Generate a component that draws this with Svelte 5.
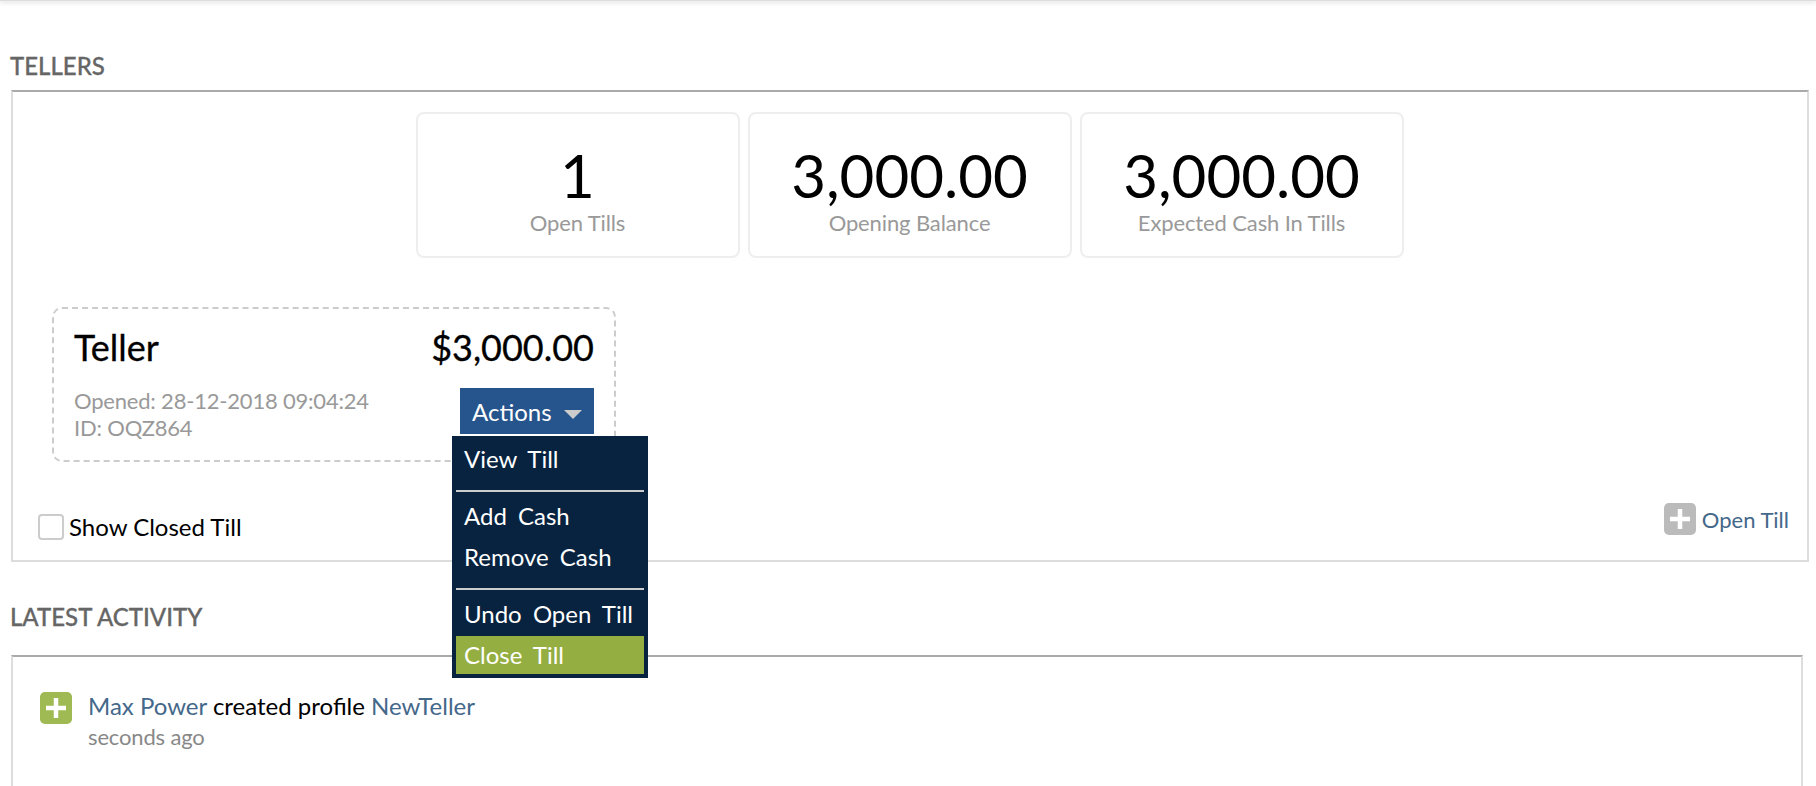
<script>
  const stats = [
    { value: '1', label: 'Open Tills' },
    { value: '3,000.00', label: 'Opening Balance' },
    { value: '3,000.00', label: 'Expected Cash In Tills' }
  ];

  const menuGroups = [
    [{ label: 'View Till' }],
    [{ label: 'Add Cash' }, { label: 'Remove Cash' }],
    [{ label: 'Undo Open Till' }, { label: 'Close Till', active: true }]
  ];
</script>

{#snippet plus(cls)}
  <svg class="plus {cls}" viewBox="0 0 32 32" aria-hidden="true">
    <rect width="32" height="32" rx="5" />
    <path d="M16 6v20M6 16h20" />
  </svg>
{/snippet}

<div class="topbar"></div>

<main class="page">
  <section class="tellers">
    <h2>TELLERS</h2>
    <div class="panel">
      <div class="stats">
        {#each stats as stat}
          <div class="stat">
            <div class="value">{stat.value}</div>
            <div class="label">{stat.label}</div>
          </div>
        {/each}
      </div>

      <div class="till">
        <div class="till-head">
          <span>Teller</span>
          <span>$3,000.00</span>
        </div>
        <div class="till-body">
          <div class="till-meta">
            <div>Opened: 28-12-2018 09:04:24</div>
            <div>ID: OQZ864</div>
          </div>
          <div class="actions">
            <button class="actions-btn">Actions <span class="caret"></span></button>
            <div class="menu">
              {#each menuGroups as group, i}
                {#if i > 0}<hr />{/if}
                <ul>
                  {#each group as item}
                    <li class:active={item.active}>{item.label}</li>
                  {/each}
                </ul>
              {/each}
            </div>
          </div>
        </div>
      </div>

      <div class="panel-foot">
        <label class="show-closed">
          <span class="check"></span>
          Show Closed Till
        </label>
        <a class="open-till" href="#open">
          {@render plus('grey')}
          Open Till
        </a>
      </div>
    </div>
  </section>

  <section class="activity">
    <h2>LATEST ACTIVITY</h2>
    <div class="panel activity-panel">
      <div class="entry">
        {@render plus('green')}
        <div>
          <div class="entry-text"><a href="#user">Max Power</a> created profile <a href="#profile">NewTeller</a></div>
          <div class="entry-time">seconds ago</div>
        </div>
      </div>
    </div>
  </section>
</main>

<style>
  :global(body) {
    background: #fff;
    overflow: hidden;
    font-family: Lato, "Open Sans", sans-serif;
    color: #000;
  }

  .topbar {
    height: 1px;
    background: #ddd;
    box-shadow: 0 1px 4px rgba(0, 0, 0, 0.35);
  }

  .page {
    padding: 0 7px 0 10px;
  }

  h2 {
    margin: 0;
    font-size: 24px;
    line-height: 28px;
    font-weight: 500;
    color: #666;
    -webkit-text-stroke: 0.3px #666;
  }

  .tellers {
    padding-top: 51px;
  }

  .tellers h2 {
    margin-bottom: 10px;
  }

  .panel {
    margin-left: 1px;
    border: 2px solid #ddd;
    border-top-color: #aaa;
    height: 471px;
    box-sizing: border-box;
  }

  .tellers .panel {
    height: 472px;
    padding: 20px 0 0;
  }

  .stats {
    display: flex;
    justify-content: center;
    gap: 8px;
    margin-left: -1px;
  }

  .stat {
    width: 324px;
    height: 146px;
    box-sizing: border-box;
    border: 2px solid #eee;
    border-radius: 8px;
    text-align: center;
  }

  .value {
    font-size: 60px;
    line-height: 72px;
    margin-top: 25px;
  }

  .label {
    font-size: 22px;
    line-height: 24px;
    letter-spacing: -0.12px;
    color: #999;
  }

  .till {
    width: 564px;
    height: 155px;
    box-sizing: border-box;
    margin: 49px 0 0 39px;
    padding: 14px 20px 0 20px;
    border: 2px dashed #ccc;
    border-radius: 10px;
  }

  .till-head {
    display: flex;
    justify-content: space-between;
    font-size: 36px;
    line-height: 48px;
    -webkit-text-stroke: 0.3px #000;
  }

  .till-body {
    display: flex;
    justify-content: space-between;
    margin-top: 17px;
  }

  .till-meta {
    font-size: 22px;
    line-height: 27px;
    letter-spacing: -0.2px;
    color: #999;
    margin-top: -1px;
  }

  .actions {
    position: relative;
  }

  .actions-btn {
    display: block;
    width: 134px;
    height: 46px;
    padding: 0 0 0 12px;
    text-align: left;
    background: #26548c;
    border: 0;
    color: #fff;
    font: 24px Lato, sans-serif;
  }

  .caret {
    display: inline-block;
    margin-left: 6px;
    vertical-align: middle;
    border-left: 9px solid transparent;
    border-right: 9px solid transparent;
    border-top: 9px solid #ccc;
  }

  .menu {
    position: absolute;
    top: 48px;
    right: -54px;
    width: 196px;
    height: 242px;
    box-sizing: border-box;
    padding: 4px;
    background: #08233f;
    color: #fff;
    font-size: 24px;
    word-spacing: 5px;
    z-index: 2;
  }

  .menu ul {
    margin: 0;
    padding: 0;
    list-style: none;
  }

  .menu li {
    height: 38px;
    line-height: 38px;
    padding-left: 8px;
    margin-top: 3px;
  }

  .menu li:first-child {
    margin-top: 0;
  }

  .menu hr {
    margin: 12px 0 5px;
    border: 0;
    height: 2px;
    background: #ccc;
  }

  .menu li.active {
    background: #95ae41;
  }

  .panel-foot {
    display: flex;
    justify-content: space-between;
    align-items: flex-start;
    margin-top: 40px;
    padding: 0 18px 0 25px;
  }

  .show-closed {
    display: flex;
    align-items: center;
    gap: 5px;
    margin-top: 10px;
    font-size: 24px;
    line-height: 30px;
  }

  .check {
    width: 26px;
    height: 26px;
    box-sizing: border-box;
    border: 2px solid #ccc;
    border-radius: 4px;
  }

  .open-till {
    display: flex;
    align-items: center;
    gap: 6px;
    margin-top: 1px;
    font-size: 22px;
    color: #44688a;
    text-decoration: none;
  }

  .plus {
    width: 32px;
    height: 32px;
    flex: none;
  }

  .plus path {
    stroke: #fff;
    stroke-width: 4.5;
    fill: none;
  }

  .plus.grey rect {
    fill: #bbb;
  }

  .plus.green rect {
    fill: #9fba52;
  }

  .activity {
    margin-top: 41px;
  }

  .activity h2 {
    margin-bottom: 24px;
  }

  .activity-panel {
    margin-right: 6px;
    padding: 35px 0 0 27px;
  }

  .entry {
    display: flex;
    gap: 16px;
  }

  .entry-text {
    font-size: 24px;
    line-height: 30px;
    margin-top: -1px;
  }

  .entry-text a {
    color: #44688a;
    text-decoration: none;
  }

  .entry-time {
    font-size: 22px;
    line-height: 32px;
    letter-spacing: -0.15px;
    color: #888;
  }
</style>
